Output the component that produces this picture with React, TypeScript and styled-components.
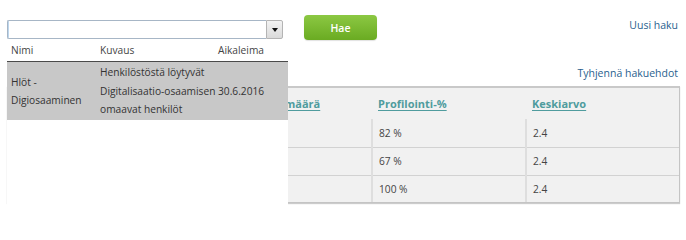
import * as React from 'react';
import styled, { createGlobalStyle } from 'styled-components';

const GlobalStyle = createGlobalStyle`
  html, body {
    margin: 0;
    padding: 0;
    background: #ffffff;
  }
  body {
    font-family: 'Segoe UI', 'Open Sans', 'Noto Sans', sans-serif;
    font-size: 10.2px;
    color: #444444;
  }
`;

type Suggestion = {
  name: string[];
  description: string[];
  date: string;
};

const suggestions: Suggestion[] = [
  {
    name: ['Hlöt -', 'Digiosaaminen'],
    description: ['Henkilöstöstä löytyvät', 'Digitalisaatio-osaamisen', 'omaavat henkilöt'],
    date: '30.6.2016',
  },
];

const results = [
  { group: 'Digiosaaminen', count: '12', profiled: '82 %', avg: '2.4' },
  { group: 'Digiosaaminen', count: '9', profiled: '67 %', avg: '2.4' },
  { group: 'Digiosaaminen', count: '4', profiled: '100 %', avg: '2.4' },
];

export default function App() {
  return (
    <>
      <GlobalStyle />
      <Page>
        <TopBar>
          <Combo>
            <ComboInput type="text" />
            <DropButton type="button" aria-label="Avaa lista">
              <Caret />
            </DropButton>
            <Popup>
              <PopupHeader>
                <PopupHead>Nimi</PopupHead>
                <PopupHead>Kuvaus</PopupHead>
                <PopupHead>Aikaleima</PopupHead>
              </PopupHeader>
              {suggestions.map((s) => (
                <PopupRow key={s.date} $selected>
                  <PopupCell>
                    {s.name.map((l) => (
                      <CellLine key={l}>{l}</CellLine>
                    ))}
                  </PopupCell>
                  <PopupCell>
                    {s.description.map((l) => (
                      <CellLine key={l}>{l}</CellLine>
                    ))}
                  </PopupCell>
                  <PopupCell>{s.date}</PopupCell>
                </PopupRow>
              ))}
            </Popup>
          </Combo>
          <SearchButton type="button">Hae</SearchButton>
          <TopLink href="#">Uusi haku</TopLink>
        </TopBar>

        <ClearRow>
          <PlainLink href="#">Tyhjennä hakuehdot</PlainLink>
        </ClearRow>

        <Panel>
          <ResultTable>
            <colgroup>
              <col style={{ width: 228 }} />
              <col style={{ width: 136 }} />
              <col style={{ width: 154 }} />
              <col />
            </colgroup>
            <thead>
              <tr>
                <HeadCell><SortLink href="#">Ryhmä</SortLink></HeadCell>
                <HeadCell><SortLink href="#">Henkilömäärä</SortLink></HeadCell>
                <HeadCell><SortLink href="#">Profilointi-%</SortLink></HeadCell>
                <HeadCell><SortLink href="#">Keskiarvo</SortLink></HeadCell>
              </tr>
            </thead>
            <tbody>
              {results.map((r, i) => (
                <DataRow key={i}>
                  <Cell>{r.group}</Cell>
                  <Cell>{r.count}</Cell>
                  <Cell>{r.profiled}</Cell>
                  <Cell>{r.avg}</Cell>
                </DataRow>
              ))}
            </tbody>
          </ResultTable>
        </Panel>
      </Page>
    </>
  );
}

const Page = styled.div`
  width: 686px;
  height: 232px;
  box-sizing: border-box;
  padding: 15px 7px 0 7px;
  position: relative;
  overflow: hidden;
`;

const TopBar = styled.div`
  display: flex;
  align-items: flex-start;
  height: 25px;
  position: relative;
  z-index: 2;
`;

const Combo = styled.div`
  position: relative;
  display: flex;
  width: 276px;
  height: 19px;
  margin-top: 5px;
`;

const ComboInput = styled.input`
  flex: 1;
  box-sizing: border-box;
  height: 19px;
  margin: 0;
  padding: 0 4px;
  border: 1px solid #a7b6c6;
  border-right: none;
  border-radius: 2px 0 0 2px;
  background: #ffffff;
  box-shadow: inset 4px 0 0 -3px #bcd6ee;
  outline: none;
  font: inherit;
`;

const DropButton = styled.button`
  width: 17px;
  height: 19px;
  box-sizing: border-box;
  margin: 0;
  padding: 0;
  border: 1px solid #b4b4b4;
  border-radius: 0 2px 2px 0;
  background: linear-gradient(#f3f3f3, #dadada);
  display: flex;
  align-items: center;
  justify-content: center;
`;

const Caret = styled.span`
  width: 0;
  height: 0;
  border-left: 3.5px solid transparent;
  border-right: 3.5px solid transparent;
  border-top: 4px solid #111111;
`;

const Popup = styled.div`
  position: absolute;
  top: 20px;
  left: 0;
  width: 281px;
  height: 200px;
  background: #ffffff;
  color: #333333;
`;

const popupColumns = '89px 118px 1fr';

const PopupHeader = styled.div`
  display: grid;
  grid-template-columns: ${popupColumns};
  height: 22px;
  box-sizing: border-box;
  align-items: end;
  padding-bottom: 4px;
  border-bottom: 1px solid #4a4a4a;
`;

const PopupHead = styled.div`
  padding-left: 4px;
  line-height: 14px;
  color: #444444;
`;

const PopupRow = styled.div<{ $selected?: boolean }>`
  display: grid;
  grid-template-columns: ${popupColumns};
  align-items: center;
  height: 58px;
  background: ${(p) => (p.$selected ? '#c8c8c8' : 'transparent')};
`;

const PopupCell = styled.div`
  padding-left: 4px;
  white-space: nowrap;
`;

const CellLine = styled.div`
  height: 18.5px;
  line-height: 18.5px;
`;

const SearchButton = styled.button`
  margin: 0 0 0 21px;
  width: 73px;
  height: 25px;
  border: none;
  border-radius: 4px;
  background: linear-gradient(#8cc843, #6aab22);
  box-shadow: 0 1px 1px rgba(0, 0, 0, 0.12);
  color: #ffffff;
  font-family: inherit;
  font-size: 10.5px;
  font-weight: 600;
`;

const PlainLink = styled.a`
  color: #2a5f8e;
  text-decoration: none;
  line-height: 16px;
  font-size: 10.5px;
`;

const TopLink = styled(PlainLink)`
  margin-left: auto;
  margin-top: 2px;
  margin-right: 1px;
`;

const ClearRow = styled.div`
  display: flex;
  justify-content: flex-end;
  margin-top: 25px;
  padding-right: 1px;
  height: 16px;
`;

const Panel = styled.div`
  margin-top: 5px;
  width: 673px;
  box-sizing: border-box;
  background: #f1f1f1;
  border: 1px solid #c4c4c4;
  border-top: 2px solid #c9c9c9;
  box-shadow: 0 1px 1px rgba(0, 0, 0, 0.2);
`;

const ResultTable = styled.table`
  width: 100%;
  border-collapse: collapse;
  table-layout: fixed;
`;

const HeadCell = styled.th`
  height: 31px;
  padding: 0 0 0 6px;
  text-align: left;
  vertical-align: middle;
`;

const SortLink = styled.a`
  color: #4f9c9e;
  font-weight: bold;
  font-size: 11px;
  text-decoration: underline;
  text-underline-offset: 2px;
`;

const DataRow = styled.tr`
  height: 28px;
  & + & td {
    border-top: 1px solid #d2d2d2;
  }
  &:last-child {
    height: 27px;
  }
`;

const Cell = styled.td`
  padding: 0 0 0 6px;
  color: #444444;
  vertical-align: middle;
  & + & {
    border-left: 2px solid #dedede;
  }
`;
